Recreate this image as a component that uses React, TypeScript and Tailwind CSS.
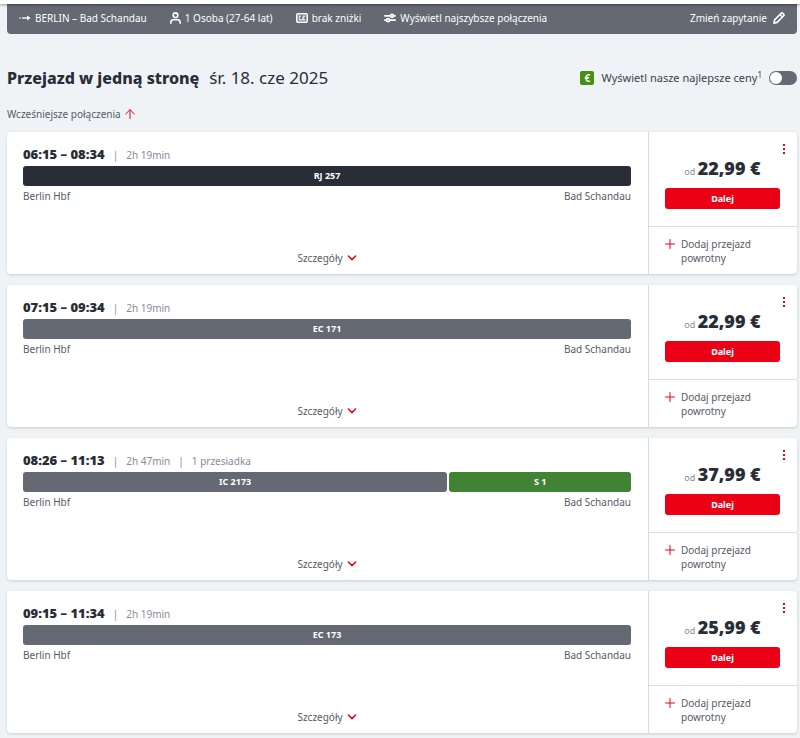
import { ReactNode } from "react";

type Segment = { label: string; className: string };

type Journey = {
  id: string;
  time: string;
  duration: string;
  changes?: string;
  price: string;
  segments: Segment[];
};

const JOURNEYS: Journey[] = [
  {
    id: "rj257",
    time: "06:15 – 08:34",
    duration: "2h 19min",
    price: "22,99 €",
    segments: [{ label: "RJ 257", className: "flex-1 bg-[#282d37]" }],
  },
  {
    id: "ec171",
    time: "07:15 – 09:34",
    duration: "2h 19min",
    price: "22,99 €",
    segments: [{ label: "EC 171", className: "flex-1 bg-[#646973]" }],
  },
  {
    id: "ic2173",
    time: "08:26 – 11:13",
    duration: "2h 47min",
    changes: "1 przesiadka",
    price: "37,99 €",
    segments: [
      { label: "IC 2173", className: "flex-[7] bg-[#646973]" },
      { label: "S 1", className: "flex-[3] bg-[#408335]" },
    ],
  },
  {
    id: "ec173",
    time: "09:15 – 11:34",
    duration: "2h 19min",
    price: "25,99 €",
    segments: [{ label: "EC 173", className: "flex-1 bg-[#646973]" }],
  },
];

function RouteIcon() {
  return (
    <svg width="12" height="8" viewBox="0 0 12 8" fill="currentColor" aria-hidden="true">
      <circle cx="1" cy="4" r="0.8" />
      <path d="M3 3.3H8.6V4.7H3Z" />
      <path d="M8 1.4L11.6 4L8 6.6Z" />
    </svg>
  );
}

function PersonIcon() {
  return (
    <svg width="11" height="12" viewBox="0 0 11 12" fill="none" stroke="currentColor" strokeWidth="1.6" strokeLinecap="round" aria-hidden="true">
      <circle cx="5.5" cy="3.2" r="2.3" />
      <path d="M0.9 11.2V10A2.4 2.4 0 0 1 3.3 7.7H7.7A2.4 2.4 0 0 1 10.1 10V11.2" />
    </svg>
  );
}

function CardIcon() {
  return (
    <svg width="12" height="10" viewBox="0 0 12 10" fill="none" stroke="currentColor" aria-hidden="true">
      <rect x="0.8" y="0.8" width="10.4" height="8.4" rx="1.2" strokeWidth="1.6" />
      <path d="M2.6 3.2H5.2M6.6 3.2H9.4M2.6 6.8H9.4M2.6 5H4.2M6.2 5H8.4" strokeWidth="1.3" />
    </svg>
  );
}

function FilterIcon() {
  return (
    <svg width="12" height="10" viewBox="0 0 12 10" fill="none" stroke="currentColor" strokeWidth="1.7" strokeLinecap="round" aria-hidden="true">
      <path d="M0.9 2.8H6.2M9.8 2.8H11.1M0.9 7.2H2.2M5.8 7.2H11.1" />
      <circle cx="8" cy="2.8" r="1.5" />
      <circle cx="4" cy="7.2" r="1.5" />
    </svg>
  );
}

function PencilIcon() {
  return (
    <svg width="12" height="12" viewBox="0 0 12 12" fill="none" stroke="currentColor" strokeWidth="1.6" strokeLinejoin="round" aria-hidden="true">
      <path d="M0.9 11.1L1.6 7.9L8.2 1.3Q9 0.5 9.8 1.3L10.7 2.2Q11.5 3 10.7 3.8L4.1 10.4Z" />
      <path d="M7 2.5L9.5 5" />
      <path d="M0.8 11.2L1.3 9L3 10.7Z" fill="currentColor" stroke="none" />
    </svg>
  );
}

function ArrowUpIcon() {
  return (
    <svg width="10" height="10" viewBox="0 0 10 10" fill="none" stroke="#ec0016" strokeWidth="1" strokeLinecap="round" aria-hidden="true">
      <path d="M5 9.6V0.8M0.6 5L5 0.7L9.4 5" />
    </svg>
  );
}

function ChevronDownIcon() {
  return (
    <svg width="10" height="6" viewBox="0 0 10 6" fill="none" stroke="#ec0016" strokeWidth="1.5" strokeLinecap="round" aria-hidden="true">
      <path d="M1.4 1L5 4.6L8.6 1" />
    </svg>
  );
}

function PlusIcon() {
  return (
    <svg width="10" height="10" viewBox="0 0 10 10" stroke="#ec0016" strokeWidth="1" strokeLinecap="round" aria-hidden="true">
      <path d="M5 0.5V9.5M0.5 5H9.5" />
    </svg>
  );
}

function MoreIcon() {
  return (
    <svg width="4" height="10" viewBox="0 0 4 10" fill="#ec0016" aria-hidden="true">
      <rect x="1" y="0" width="2" height="2" />
      <rect x="1" y="4" width="2" height="2" />
      <rect x="1" y="8" width="2" height="2" />
    </svg>
  );
}

function QueryItem({ icon, children }: { icon: ReactNode; children: ReactNode }) {
  return (
    <span className="flex items-center gap-1 whitespace-nowrap">
      {icon}
      {children}
    </span>
  );
}

function QueryBar() {
  return (
    <div className="flex h-[30px] items-center justify-between rounded-b-sm bg-[#646973] px-3 pb-0.5 text-[10px] text-white">
      <div className="flex items-center gap-[23px]">
        <QueryItem icon={<RouteIcon />}>BERLIN – Bad Schandau</QueryItem>
        <QueryItem icon={<PersonIcon />}>1 Osoba (27-64 lat)</QueryItem>
        <QueryItem icon={<CardIcon />}>brak zniżki</QueryItem>
        <QueryItem icon={<FilterIcon />}>Wyświetl najszybsze połączenia</QueryItem>
      </div>
      <button type="button" className="flex items-center gap-1.5 whitespace-nowrap">
        Zmień zapytanie
        <PencilIcon />
      </button>
    </div>
  );
}

function JourneyCard({ journey }: { journey: Journey }) {
  return (
    <li className="flex rounded bg-white text-[10px] text-[#565b65] shadow-[0_1px_3px_rgba(0,0,0,0.16)]">
      <div className="flex flex-1 flex-col pt-[15px] pr-[17px] pb-2 pl-4">
        <div className="flex h-4 items-center gap-2 text-[#878c96]">
          <h2 className="text-[13px] font-black text-[#282d37]">{journey.time}</h2>
          <span>|</span>
          <span>{journey.duration}</span>
          {journey.changes && (
            <>
              <span>|</span>
              <span>{journey.changes}</span>
            </>
          )}
        </div>
        <div className="mt-[3px] flex gap-0.5">
          {journey.segments.map((segment) => (
            <div
              key={segment.label}
              className={`flex h-5 items-center justify-center rounded-[3px] text-[9px] font-bold text-white ${segment.className}`}
            >
              {segment.label}
            </div>
          ))}
        </div>
        <div className="mt-0.5 flex justify-between leading-4">
          <span>Berlin Hbf</span>
          <span>Bad Schandau</span>
        </div>
        <button type="button" className="mx-auto mt-auto flex items-center gap-1 leading-4">
          Szczegóły
          <ChevronDownIcon />
        </button>
      </div>

      <div className="w-[149px] border-l border-[#d7dce1]">
        <div className="flex flex-col border-b border-[#d7dce1] pt-3 pr-[17px] pb-[17px] pl-4">
          <button type="button" aria-label="Więcej" className="-mr-1.5 self-end">
            <MoreIcon />
          </button>
          <p className="mt-0.5 text-center text-[9px] leading-6 text-[#878c96]">
            od <strong className="text-[18px] font-black text-[#282d37]">{journey.price}</strong>
          </p>
          <button type="button" className="mt-1 h-[21px] rounded-[3px] bg-[#ec0016] text-[9px] font-bold text-white">
            Dalej
          </button>
        </div>
        <button type="button" className="flex items-start gap-1.5 px-4 pt-[10px] pb-[9px] text-left leading-[14px]">
          <span className="flex h-[14px] items-center">
            <PlusIcon />
          </span>
          <span>
            Dodaj przejazd
            <br />
            powrotny
          </span>
        </button>
      </div>
    </li>
  );
}

export default function App() {
  return (
    <div className="min-h-screen bg-[#eff3f6] pb-1 font-['Noto_Sans',sans-serif]">
      <header className="relative h-1 bg-white shadow-[0_1px_3px_rgba(0,0,0,0.4)]" />
      <main className="pr-[3px] pl-[7px]">
        <QueryBar />

        <div className="mt-8 flex h-6 items-center justify-between">
          <h1 className="flex items-center gap-[10px] text-[17px] whitespace-nowrap text-[#282d37]">
            <span className="text-[16px] font-extrabold">Przejazd w jedną stronę</span>
            <span>śr. 18. cze 2025</span>
          </h1>
          <div className="flex items-center gap-[7px]">
            <span className="flex size-[14px] items-center justify-center rounded-[2px] bg-[#4a8c14] text-[10px] font-bold text-white">
              €
            </span>
            <label htmlFor="best-prices" className="text-[11px] whitespace-nowrap text-[#3c414b]">
              Wyświetl nasze najlepsze ceny<sup className="text-[8px]">1</sup>
            </label>
            <input
              id="best-prices"
              type="checkbox"
              role="switch"
              className="h-[14px] w-7 appearance-none rounded-full bg-[#646973] p-px before:block before:size-3 before:rounded-full before:bg-white checked:before:translate-x-[14px]"
            />
          </div>
        </div>

        <button type="button" className="mt-4 flex items-center gap-1 text-[10px] leading-4 text-[#565b65]">
          Wcześniejsze połączenia
          <ArrowUpIcon />
        </button>

        <ul className="mt-[10px] flex flex-col gap-[11px]">
          {JOURNEYS.map((journey) => (
            <JourneyCard key={journey.id} journey={journey} />
          ))}
        </ul>
      </main>
    </div>
  );
}
